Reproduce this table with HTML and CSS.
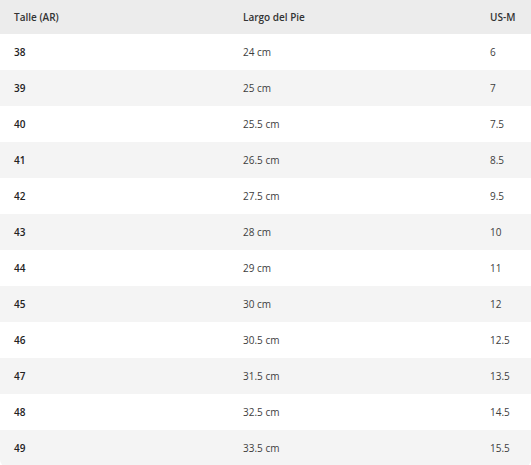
FILE: index.html
```html
<!DOCTYPE html>
<html lang="es">
<head>
<meta charset="utf-8">
<link rel="stylesheet" href="styles.css">
</head>
<body>
<table class="sizes">
  <thead>
    <tr><th class="c1">Talle (AR)</th><th class="c2">Largo del Pie</th><th class="c3">US-M</th></tr>
  </thead>
  <tbody>
    <tr><td class="talle">38</td><td>24 cm</td><td>6</td></tr>
    <tr><td class="talle">39</td><td>25 cm</td><td>7</td></tr>
    <tr><td class="talle">40</td><td>25.5 cm</td><td>7.5</td></tr>
    <tr><td class="talle">41</td><td>26.5 cm</td><td>8.5</td></tr>
    <tr><td class="talle">42</td><td>27.5 cm</td><td>9.5</td></tr>
    <tr><td class="talle">43</td><td>28 cm</td><td>10</td></tr>
    <tr><td class="talle">44</td><td>29 cm</td><td>11</td></tr>
    <tr><td class="talle">45</td><td>30 cm</td><td>12</td></tr>
    <tr><td class="talle">46</td><td>30.5 cm</td><td>12.5</td></tr>
    <tr><td class="talle">47</td><td>31.5 cm</td><td>13.5</td></tr>
    <tr><td class="talle">48</td><td>32.5 cm</td><td>14.5</td></tr>
    <tr><td class="talle">49</td><td>33.5 cm</td><td>15.5</td></tr>
  </tbody>
</table>
</body>
</html>
```
FILE: styles.css
```css
html, body {
  margin: 0;
  padding: 0;
  background: #ffffff;
}
body {
  font-family: "Open Sans", "Noto Sans", sans-serif;
  font-size: 10px;
  color: #333;
}
.sizes {
  width: 531px;
  border-collapse: separate;
  border-spacing: 0;
  table-layout: fixed;
}
.sizes th, .sizes td {
  text-align: left;
  padding: 0 0 0 14px;
  height: 36px;
  vertical-align: middle;
  white-space: nowrap;
}
.sizes th {
  height: 34px;
  background: #ececec;
  font-weight: 600;
  color: #333;
}
.c1 { width: 215px; }
.c2 { width: 233px; }
.c3 { width: 41px; }
.sizes tbody tr:nth-child(odd) td { background: #ffffff; }
.sizes tbody tr:nth-child(even) td { background: #f4f4f4; }
.sizes td { color: #3d3d3d; }
.sizes td.talle { font-weight: 600; color: #222; }
.sizes tbody tr:last-child td:first-child { border-bottom-left-radius: 6px; }
.sizes tbody tr:last-child td:last-child { border-bottom-right-radius: 6px; }
```
